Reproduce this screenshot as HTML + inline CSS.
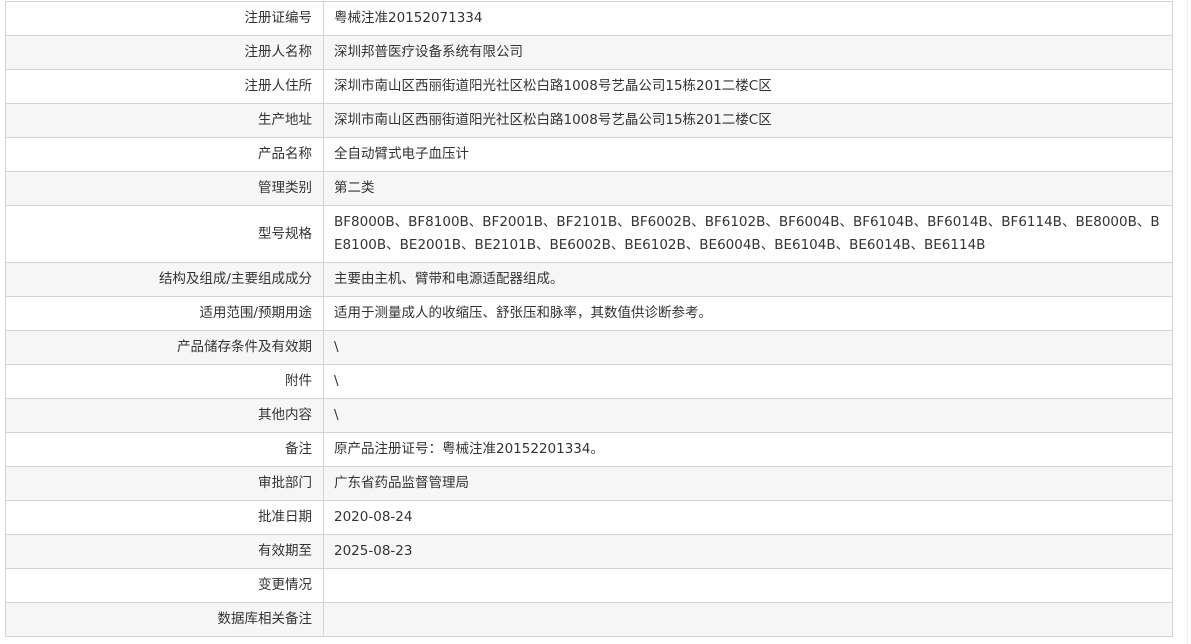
<!DOCTYPE html>
<html><head><meta charset="utf-8"><style>
body{margin:0;background:#fff;width:1191px;height:644px;overflow:hidden;font-family:"DejaVu Sans","Noto Sans CJK SC",sans-serif;font-size:13.5px;color:#333}
table{position:absolute;left:5px;top:1px;width:1168px;border-collapse:collapse}
td{border:1px solid #d4d4d4;height:34px;padding:0 10px;line-height:23px;box-sizing:border-box}
td.l{width:318px;text-align:right;padding-right:11px}
tr:nth-child(even) td{background:#f6f6f6}
tr.t td{height:57px}
.sb{position:absolute;left:1187px;top:0;width:1px;height:644px;background:#eee}
</style></head><body>
<table>
<tr><td class="l">注册证编号</td><td>粤械注准20152071334</td></tr>
<tr><td class="l">注册人名称</td><td>深圳邦普医疗设备系统有限公司</td></tr>
<tr><td class="l">注册人住所</td><td>深圳市南山区西丽街道阳光社区松白路1008号艺晶公司15栋201二楼C区</td></tr>
<tr><td class="l">生产地址</td><td>深圳市南山区西丽街道阳光社区松白路1008号艺晶公司15栋201二楼C区</td></tr>
<tr><td class="l">产品名称</td><td>全自动臂式电子血压计</td></tr>
<tr><td class="l">管理类别</td><td>第二类</td></tr>
<tr class="t"><td class="l">型号规格</td><td style="word-break:break-all">BF8000B、BF8100B、BF2001B、BF2101B、BF6002B、BF6102B、BF6004B、BF6104B、BF6014B、BF6114B、BE8000B、BE8100B、BE2001B、BE2101B、BE6002B、BE6102B、BE6004B、BE6104B、BE6014B、BE6114B</td></tr>
<tr><td class="l">结构及组成/主要组成成分</td><td>主要由主机、臂带和电源适配器组成。</td></tr>
<tr><td class="l">适用范围/预期用途</td><td>适用于测量成人的收缩压、舒张压和脉率，其数值供诊断参考。</td></tr>
<tr><td class="l">产品储存条件及有效期</td><td>\</td></tr>
<tr><td class="l">附件</td><td>\</td></tr>
<tr><td class="l">其他内容</td><td>\</td></tr>
<tr><td class="l">备注</td><td>原产品注册证号：粤械注准20152201334。</td></tr>
<tr><td class="l">审批部门</td><td>广东省药品监督管理局</td></tr>
<tr><td class="l">批准日期</td><td>2020-08-24</td></tr>
<tr><td class="l">有效期至</td><td>2025-08-23</td></tr>
<tr><td class="l">变更情况</td><td></td></tr>
<tr><td class="l">数据库相关备注</td><td></td></tr>
</table>
<div class="sb"></div>
</body></html>
